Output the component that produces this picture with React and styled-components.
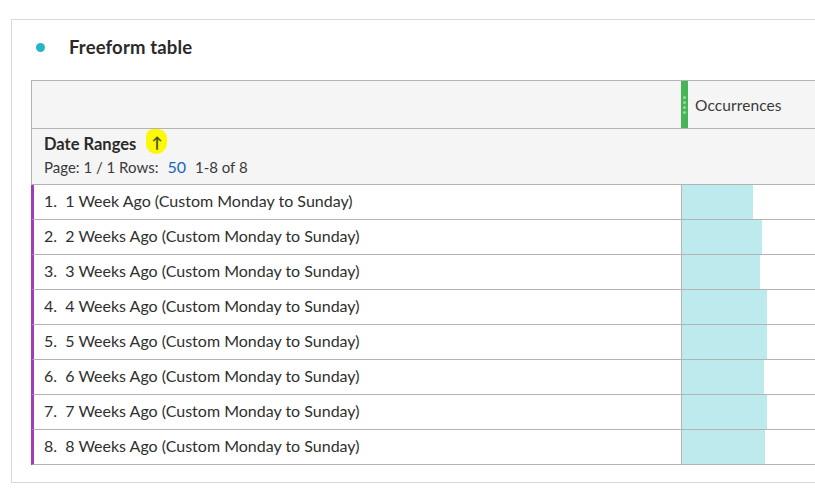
import React from "react";
import styled, { createGlobalStyle } from "styled-components";

const Global = createGlobalStyle`
  html, body { margin: 0; padding: 0; background: #fff; }
  body { font-family: Lato, "Open Sans", sans-serif; color: #2c2c2c; overflow: hidden; }
  #root { width: 815px; height: 490px; overflow: hidden; }
`;

const Page = styled.div`
  padding: 19px 0 0 11px;
`;

const Panel = styled.section`
  width: 840px;
  height: 464px;
  box-sizing: border-box;
  border: 1px solid #d9d9d9;
  padding: 0 0 0 19px;
`;

const TitleBar = styled.header`
  display: flex;
  align-items: center;
  height: 60px;
  box-sizing: border-box;
  padding: 0 0 6px 5px;
  gap: 24px;
`;

const Dot = styled.span`
  width: 9px;
  height: 9px;
  border-radius: 50%;
  background: #26b5c6;
`;

const Title = styled.h2`
  margin: 0;
  font-size: 18.5px;
  font-weight: 700;
  color: #2a2a2a;
  letter-spacing: 0.15px;
`;

const Table = styled.div`
  display: grid;
  grid-template-columns: 649px 1fr;
  border-left: 1px solid #b3b3b3;
  border-top: 1px solid #b3b3b3;
`;

const HeadCell = styled.div`
  background: #f5f5f5;
  border-bottom: 1px solid #b3b3b3;
  box-sizing: border-box;
  height: ${(p) => p.$h}px;
  display: flex;
  align-items: center;
`;

const Grip = styled.span`
  align-self: stretch;
  width: 7px;
  background: #45b556;
  display: flex;
  flex-direction: column;
  align-items: center;
  justify-content: center;
  gap: 2px;
  margin-right: 7px;
  & i {
    width: 3px;
    height: 3px;
    border-radius: 50%;
    background: #9ad8a2;
  }
`;

const MetricName = styled.span`
  font-size: 15.5px;
  color: #3a3a3a;
  letter-spacing: 0.1px;
`;

const DimHead = styled.div`
  display: flex;
  flex-direction: column;
  justify-content: center;
  gap: 3px;
  padding: 0 0 4px 12px;
`;

const DimTitle = styled.div`
  display: flex;
  align-items: center;
  font-size: 16.5px;
  font-weight: 700;
  color: #2a2a2a;
`;

const SortMark = styled.span`
  display: inline-flex;
  align-items: center;
  justify-content: center;
  width: 21px;
  height: 25px;
  margin: -4px 0 0 10px;
  background: #fbf80a;
  border-radius: 7px 9px 11px 10px;
  color: #4d4d12;
  font-size: 15px;
  font-weight: 700;
`;

const Pager = styled.div`
  font-size: 15px;
  color: #3a3a3a;
  & b {
    font-weight: 400;
    color: #1565c8;
    margin: 0 9px 0 9px;
    font-size: 16px;
  }
`;

const RowLabel = styled.div`
  height: 35px;
  box-sizing: border-box;
  border-bottom: 1px solid #b3b3b3;
  border-left: 3px solid #9e3db6;
  margin-left: -1px;
  padding: 0 0 3px 10px;
  display: flex;
  align-items: center;
  font-size: 16px;
  color: #2f2f2f;
  white-space: pre;
`;

const ValueCell = styled.div`
  height: 35px;
  box-sizing: border-box;
  border-bottom: 1px solid #b3b3b3;
  border-left: 1px solid #b3b3b3;
  display: flex;
`;

const Bar = styled.div`
  height: 100%;
  background: #bdebed;
`;

const rows = [
  ["1.", "1 Week Ago (Custom Monday to Sunday)", 71],
  ["2.", "2 Weeks Ago (Custom Monday to Sunday)", 80],
  ["3.", "3 Weeks Ago (Custom Monday to Sunday)", 78],
  ["4.", "4 Weeks Ago (Custom Monday to Sunday)", 85],
  ["5.", "5 Weeks Ago (Custom Monday to Sunday)", 85],
  ["6.", "6 Weeks Ago (Custom Monday to Sunday)", 82],
  ["7.", "7 Weeks Ago (Custom Monday to Sunday)", 85],
  ["8.", "8 Weeks Ago (Custom Monday to Sunday)", 83],
];

export default function App() {
  return (
    <>
      <Global />
      <Page>
        <Panel>
          <TitleBar>
            <Dot />
            <Title>Freeform table</Title>
          </TitleBar>
          <Table>
            <HeadCell $h={48} />
            <HeadCell $h={48}>
              <Grip>
                <i />
                <i />
                <i />
                <i />
              </Grip>
              <MetricName>Occurrences</MetricName>
            </HeadCell>
            <HeadCell $h={56}>
              <DimHead>
                <DimTitle>
                  Date Ranges
                  <SortMark>↑</SortMark>
                </DimTitle>
                <Pager>
                  Page: 1 / 1 Rows:<b>50</b>1-8 of 8
                </Pager>
              </DimHead>
            </HeadCell>
            <HeadCell $h={56} />
            {rows.map(([n, label, w]) => (
              <React.Fragment key={n}>
                <RowLabel>{`${n}  ${label}`}</RowLabel>
                <ValueCell>
                  <Bar style={{ width: w }} />
                </ValueCell>
              </React.Fragment>
            ))}
          </Table>
        </Panel>
      </Page>
    </>
  );
}
